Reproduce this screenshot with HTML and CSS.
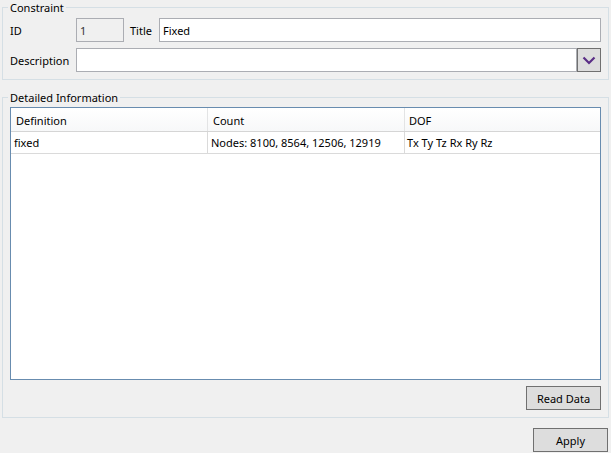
FILE: index.html
```html
<!DOCTYPE html>
<html>
<head>
<meta charset="utf-8">
<link rel="stylesheet" href="styles.css">
</head>
<body>
<div class="page">
  <fieldset class="group g1">
    <legend>Constraint</legend>
    <div class="row">
      <span class="lbl">ID</span>
      <div class="tb id">1</div>
      <span class="lbl title-lbl">Title</span>
      <div class="tb grow">Fixed</div>
    </div>
    <div class="row row2">
      <span class="lbl">Description</span>
      <div class="combo">
        <div class="tb grow"></div>
        <div class="dd">
          <svg width="14" height="9" viewBox="0 0 14 9"><path d="M1.5 1.5 L7 7 L12.5 1.5" fill="none" stroke="#5a2d86" stroke-width="2.2"/></svg>
        </div>
      </div>
    </div>
  </fieldset>

  <fieldset class="group g2">
    <legend>Detailed Information</legend>
    <div class="grid">
      <div class="hdr">
        <div class="c">Definition</div>
        <div class="c">Count</div>
        <div class="c last">DOF</div>
      </div>
      <div class="tr">
        <div class="c">fixed</div>
        <div class="c">Nodes: 8100, 8564, 12506, 12919</div>
        <div class="c last">Tx Ty Tz Rx Ry Rz</div>
      </div>
    </div>
    <div class="actions">
      <button class="btn">Read Data</button>
    </div>
  </fieldset>

  <div class="footer">
    <button class="btn">Apply</button>
  </div>
</div>
</body>
</html>
```

FILE: styles.css
```css
html, body {
  margin: 0;
  padding: 0;
  background: #f0f0f0;
}
body {
  font-family: "Noto Sans", "Open Sans", sans-serif;
  font-size: 11px;
  color: #000;
  width: 611px;
  height: 453px;
  overflow: hidden;
}
.page {
  display: flex;
  flex-direction: column;
}
.group {
  margin: 0 2px;
  border: 1px solid #d5dfe5;
  padding: 4px 7px 7px 7px;
  min-width: 0;
}
.group legend {
  padding: 0 2px;
  margin-left: -2px;
  line-height: 15px;
  height: 14px;
}
.g2 {
  margin-top: 10px;
  padding-top: 3px;
}
.row {
  display: flex;
  align-items: center;
  height: 24px;
}
.row2 {
  margin-top: 6px;
}
.lbl {
  width: 66px;
  flex: none;
  line-height: 24px;
  padding-top: 1px;
  box-sizing: border-box;
  height: 24px;
}
.title-lbl {
  width: 29px;
  margin-left: 6px;
}
.tb {
  box-sizing: border-box;
  height: 24px;
  border: 1px solid #abadb3;
  background: #fff;
  padding: 1px 3px 0 3px;
  line-height: 22px;
  font-size: 11px;
}
.tb.id {
  width: 48px;
  flex: none;
  background: #f0f0f0;
  color: #333;
  padding-left: 3px;
}
.grow {
  flex: 1;
  min-width: 0;
}
.combo {
  flex: 1;
  display: flex;
  height: 24px;
}
.dd {
  box-sizing: border-box;
  width: 24px;
  height: 24px;
  flex: none;
  background: #dddddd;
  border: 1px solid #707070;
  display: flex;
  align-items: center;
  justify-content: center;
}
.grid {
  box-sizing: border-box;
  height: 273px;
  border: 1px solid #688caf;
  background: #fff;
}
.hdr, .tr {
  display: grid;
  grid-template-columns: 197px 197px 1fr;
  box-sizing: border-box;
}
.hdr {
  height: 24px;
  border-bottom: 1px solid #d5d5d5;
  background: linear-gradient(#ffffff, #f7f8f9);
}
.hdr .c {
  border-right: 1px solid #e3e4e5;
  padding-left: 5px;
  padding-top: 1px;
  line-height: 23px;
  height: 23px;
  box-sizing: border-box;
}
.tr {
  height: 22px;
  border-bottom: 1px solid #dadada;
}
.tr .c {
  border-right: 1px solid #dadada;
  padding-left: 3px;
  line-height: 21px;
}
.c {
  white-space: nowrap;
  overflow: hidden;
}
.hdr .c.last, .tr .c.last {
  border-right: none;
  padding-left: 4px;
}
.tr .c.last {
  padding-left: 2px;
}
.actions {
  display: flex;
  justify-content: flex-end;
  margin-top: 6px;
}
.btn {
  box-sizing: border-box;
  width: 75px;
  height: 24px;
  border: 1px solid #707070;
  background: #dddddd;
  font-family: "Noto Sans", "Open Sans", sans-serif;
  font-size: 11px;
  color: #000;
  padding: 1px 0 0 0;
  margin: 0;
  border-radius: 0;
}
.footer {
  display: flex;
  justify-content: flex-end;
  margin-top: 10px;
  padding-right: 3px;
}
```
